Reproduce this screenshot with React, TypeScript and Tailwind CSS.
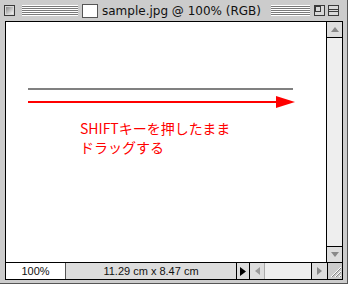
import React from 'react';

const stripes =
  'bg-[repeating-linear-gradient(to_bottom,#ffffff_0px,#ffffff_1px,#7a7a7a_1px,#7a7a7a_2px)]';

function TitleBox({ kind }: { kind: 'close' | 'zoom' | 'collapse' }) {
  return (
    <div className="w-[11px] h-[11px] border border-[#3a3a3a] bg-[#d8d8d8] relative shrink-0">
      {kind === 'close' && (
        <div className="absolute inset-[1px] bg-[linear-gradient(135deg,#8a8a8a,#f2f2f2)]" />
      )}
      {kind === 'zoom' && (
        <svg width="9" height="9" className="absolute left-0 top-0">
          <rect x="0.5" y="0.5" width="5" height="5" fill="none" stroke="#3a3a3a" />
        </svg>
      )}
      {kind === 'collapse' && (
        <svg width="9" height="9" className="absolute left-0 top-0">
          <line x1="0" y1="3.5" x2="9" y2="3.5" stroke="#3a3a3a" />
          <line x1="0" y1="5.5" x2="9" y2="5.5" stroke="#3a3a3a" />
        </svg>
      )}
    </div>
  );
}

export default function App() {
  return (
    <div
      className="w-[348px] h-[284px] bg-[#cccccc] border-r border-b border-[#555555] flex flex-col overflow-hidden"
      style={{ fontFamily: '"Liberation Sans", "DejaVu Sans", sans-serif' }}
    >
      {/* title bar */}
      <div className="h-[21px] flex items-center pl-[4px] pr-[8px] shrink-0">
        <TitleBox kind="close" />
        <div className={`ml-[7px] w-[56px] h-[11px] ${stripes}`} />
        <div className="ml-[4px] w-[16px] h-[14px] bg-white border border-[#555555] shrink-0" />
        <span
          className="ml-[4px] text-[12px] leading-none text-[#111111] whitespace-nowrap"
          style={{ fontFamily: '"DejaVu Sans", "Liberation Sans", sans-serif' }}
        >
          sample.jpg @ 100% (RGB)
        </span>
        <div className={`ml-[10px] flex-1 h-[11px] ${stripes}`} />
        <div className="ml-[4px] flex gap-[3px]">
          <TitleBox kind="zoom" />
          <TitleBox kind="collapse" />
        </div>
      </div>

      {/* window body */}
      <div className="ml-[5px] w-[338px] h-[259px] border border-black flex flex-col">
        <div className="flex h-[240px]">
          {/* canvas */}
          <div className="w-[320px] bg-white flex flex-col">
            <svg width="320" height="97" className="block shrink-0">
              <rect x="22" y="66" width="265" height="2" fill="#808080" />
              <rect x="22" y="79" width="250" height="2" fill="#ff0000" />
              <polygon points="270,74 289,80 270,86" fill="#ff0000" />
            </svg>
            <div
              className="pl-[74px] text-[14px] leading-[19px] text-[#ff0000]"
              style={{ fontFamily: '"Noto Sans CJK JP", "Noto Sans", sans-serif' }}
            >
              <div>SHIFTキーを押したまま</div>
              <div>ドラッグする</div>
            </div>
          </div>
          {/* vertical scrollbar */}
          <div className="w-[16px] border-l border-black bg-[#eeeeee] flex flex-col justify-between">
            <div className="h-[16px] border-b border-black bg-[#dddddd] flex items-center justify-center">
              <svg width="8" height="5">
                <polygon points="0,5 4,0 8,5" fill="#888888" />
              </svg>
            </div>
            <div className="h-[16px] border-t border-black bg-[#dddddd] flex items-center justify-center">
              <svg width="8" height="5">
                <polygon points="0,0 8,0 4,5" fill="#888888" />
              </svg>
            </div>
          </div>
        </div>

        {/* status bar */}
        <div className="flex h-[17px] border-t border-black text-[11px] leading-none text-[#111111]">
          <div className="w-[60px] bg-white border-r border-[#555555] flex items-center justify-center">
            100%
          </div>
          <div className="w-[170px] bg-[#dddddd] flex items-center justify-center">
            11.29 cm x 8.47 cm
          </div>
          <div className="w-[14px] bg-[#dddddd] border-l border-r border-black flex items-center justify-center">
            <svg width="6" height="9">
              <polygon points="0,0 6,4.5 0,9" fill="#000000" />
            </svg>
          </div>
          <div className="w-[15px] bg-[#dddddd] border-r border-[#aaaaaa] flex items-center justify-center">
            <svg width="5" height="8">
              <polygon points="5,0 0,4 5,8" fill="#999999" />
            </svg>
          </div>
          <div className="flex-1 bg-[#eeeeee]" />
          <div className="w-[16px] bg-[#dddddd] border-l border-black flex items-center justify-center">
            <svg width="5" height="8">
              <polygon points="0,0 5,4 0,8" fill="#888888" />
            </svg>
          </div>
          <div className="w-[15px] bg-[#cccccc] border-l border-black flex items-center justify-center">
            <svg width="13" height="13">
              <line x1="2" y1="12" x2="12" y2="2" stroke="#ffffff" strokeWidth="1" />
              <line x1="3" y1="12" x2="12" y2="3" stroke="#888888" strokeWidth="1" />
              <line x1="6" y1="12" x2="12" y2="6" stroke="#ffffff" strokeWidth="1" />
              <line x1="7" y1="12" x2="12" y2="7" stroke="#888888" strokeWidth="1" />
              <line x1="10" y1="12" x2="12" y2="10" stroke="#ffffff" strokeWidth="1" />
              <line x1="11" y1="12" x2="12" y2="11" stroke="#888888" strokeWidth="1" />
            </svg>
          </div>
        </div>
      </div>
    </div>
  );
}
